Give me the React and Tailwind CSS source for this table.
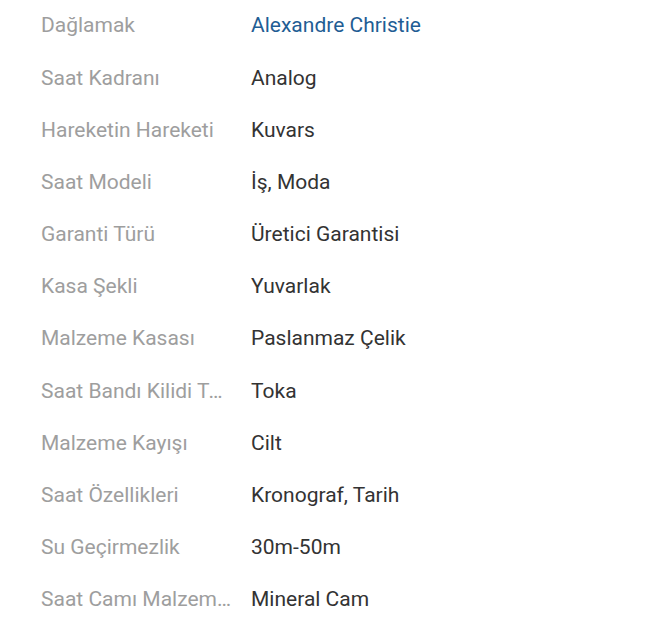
export default function App() {
  const rows = [
    ["Dağlamak", "Alexandre Christie", true],
    ["Saat Kadranı", "Analog"],
    ["Hareketin Hareketi", "Kuvars"],
    ["Saat Modeli", "İş, Moda"],
    ["Garanti Türü", "Üretici Garantisi"],
    ["Kasa Şekli", "Yuvarlak"],
    ["Malzeme Kasası", "Paslanmaz Çelik"],
    ["Saat Bandı Kilidi Türü", "Toka"],
    ["Malzeme Kayışı", "Cilt"],
    ["Saat Özellikleri", "Kronograf, Tarih"],
    ["Su Geçirmezlik", "30m-50m"],
    ["Saat Camı Malzemesi", "Mineral Cam"],
  ];
  return (
    <div className="w-[672px] h-[625px] bg-white pl-[41px] font-['Roboto',sans-serif] text-[21px]">
      {rows.map(([label, value, link]) => (
        <div key={label} className="flex h-[52.2px] items-center">
          <div className="w-[191px] shrink-0 truncate text-[#9e9e9e]">{label}</div>
          <div className="ml-[19px] text-[#333]">
            {link ? <span className="text-[#1f5d94]">{value}</span> : value}
          </div>
        </div>
      ))}
    </div>
  );
}
